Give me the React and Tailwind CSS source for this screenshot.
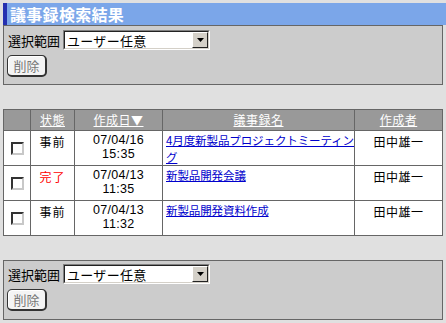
const rows = [
  { status: '事前', done: false, date: '07/04/16', time: '15:35', title: ['4月度新製品プロジェクトミーティン', 'グ'], owner: '田中雄一' },
  { status: '完了', done: true, date: '07/04/13', time: '11:35', title: ['新製品開発会議'], owner: '田中雄一' },
  { status: '事前', done: false, date: '07/04/13', time: '11:32', title: ['新製品開発資料作成'], owner: '田中雄一' },
];

function Select() {
  return (
    <div className="w-[147px] h-[20px] border border-t-[#808080] border-l-[#808080] border-b-white border-r-white">
      <div className="h-full flex items-center bg-white border border-t-[#222] border-l-[#222] border-b-[#d4d0c8] border-r-[#d4d0c8]">
        <span className="flex-1 pl-[2px] text-[13px] leading-none text-black tracking-[0.3px]">ユーザー任意</span>
        <div className="w-[16px] h-[16px] bg-[#d4d0c8] border border-t-white border-l-white border-b-[#222] border-r-[#222] flex items-center justify-center">
          <svg width="7" height="4" viewBox="0 0 7 4">
            <polygon points="0,0 7,0 3.5,4" fill="#000" />
          </svg>
        </div>
      </div>
    </div>
  );
}

function Panel({ top }) {
  return (
    <div className={`mx-[3px] w-[440px] h-[60px] border border-[#666] bg-[#cccccc] pl-[3px] ${top ? 'pt-[4px]' : 'pt-[3px]'}`}>
      <div className="flex items-center gap-[3px] pl-[1px]">
        <span className="text-[13px] leading-none text-black">選択範囲</span>
        <Select />
      </div>
      <button className="mt-[5px] w-[40px] h-[22px] rounded-[5px] bg-[#f4f4f4] border border-[#333] border-r-2 border-b-2 shadow-[inset_1px_1px_0_#fff] text-[13px] leading-none text-[#777] flex items-center justify-center">
        削除
      </button>
    </div>
  );
}

function Checkbox() {
  return (
    <div className="mx-auto w-[13px] h-[13px] bg-white border-2 border-t-[#333] border-l-[#333] border-b-[#c8c8c8] border-r-[#c8c8c8]" />
  );
}

export default function App() {
  return (
    <div className="min-h-[323px] bg-[#e0e0e0] pt-[3px] pb-[4px] font-['Noto_Sans_CJK_JP',sans-serif] text-black">
      {/* タイトル */}
      <div className="ml-[3px] h-[22px] bg-[#7ba6e9] border-l-4 border-[#2530b0] flex items-center pl-[3px]">
        <span className="text-[16px] font-bold text-white leading-none tracking-[0.3px]">議事録検索結果</span>
      </div>

      <Panel top />

      {/* 一覧 */}
      <table className="mt-[24px] mx-[3px] w-[440px] border-collapse border border-[#666] bg-white table-fixed text-[12px] leading-[14px]">
        <colgroup>
          <col className="w-[27px]" />
          <col className="w-[44px]" />
          <col className="w-[88px]" />
          <col className="w-[192px]" />
          <col />
        </colgroup>
        <thead>
          <tr className="h-[21px] bg-[#999999] text-white">
            <th className="border border-[#666] font-normal"></th>
            <th className="border border-[#666] font-normal underline tracking-[0.5px]">状態</th>
            <th className="border border-[#666] font-normal underline tracking-[0.5px]">作成日▼</th>
            <th className="border border-[#666] font-normal underline tracking-[0.5px]">議事録名</th>
            <th className="border border-[#666] font-normal underline tracking-[0.5px]">作成者</th>
          </tr>
        </thead>
        <tbody>
          {rows.map((r, i) => (
            <tr key={i} className="h-[35px]">
              <td className="border border-[#666] align-middle"><Checkbox /></td>
              <td className={`border border-[#666] align-top text-center pt-[4px] tracking-[1px] ${r.done ? 'text-[#ff0000]' : ''}`}>{r.status}</td>
              <td className="border border-[#666] align-top text-center pt-[3px] font-['Liberation_Sans',sans-serif] text-[12.5px] leading-[13.5px] tracking-[0.3px]">
                {r.date}<br />{r.time}
              </td>
              <td className="border border-[#666] align-top pt-[1px] pl-[3px] text-[11.5px] leading-[16.5px]">
                <a href="#" className="text-[#0000cc] underline whitespace-nowrap tracking-[-0.1px]">
                  {r.title.map((t, j) => (
                    <span key={j}>{j > 0 && <br />}{t}</span>
                  ))}
                </a>
              </td>
              <td className="border border-[#666] align-top text-center pt-[4px] tracking-[0.5px]">{r.owner}</td>
            </tr>
          ))}
        </tbody>
      </table>

      <div className="mt-[24px]">
        <Panel />
      </div>
    </div>
  );
}
